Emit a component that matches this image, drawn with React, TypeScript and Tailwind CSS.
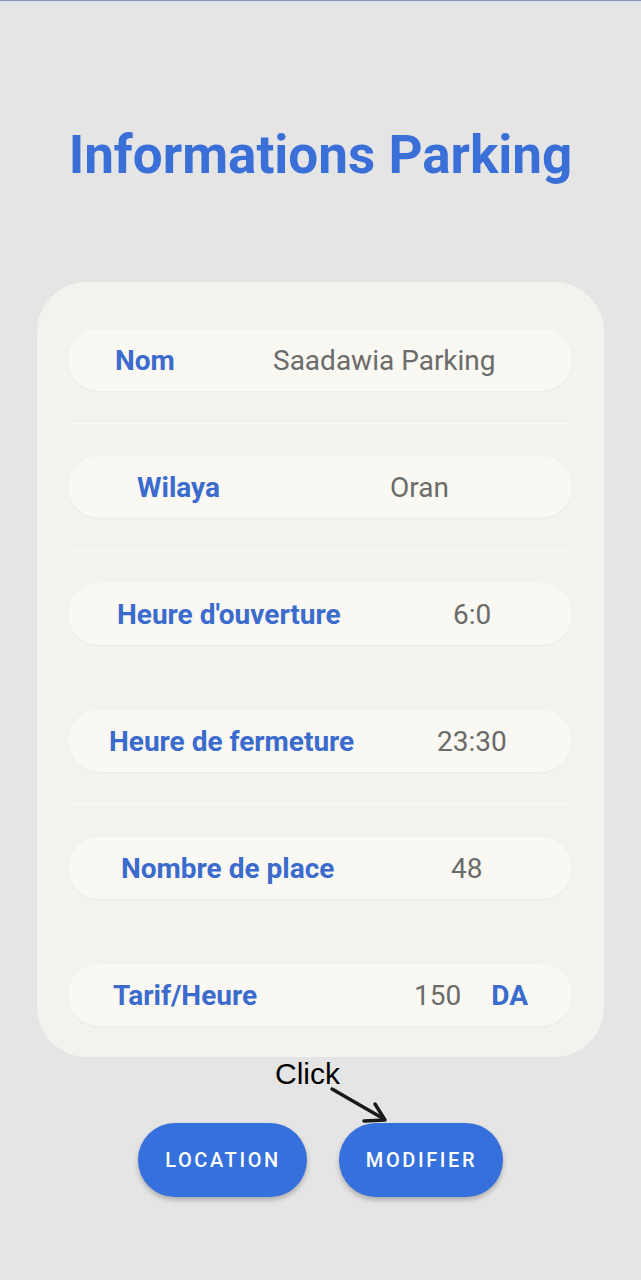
import React from "react";

const rows = [
  { label: "Nom", value: "Saadawia Parking", grid: "grid-cols-[205px_1fr]", lpad: "pl-[47px]", divider: true },
  { label: "Wilaya", value: "Oran", grid: "grid-cols-[322px_1fr]", lpad: "pl-[69px]", divider: true },
  { label: "Heure d'ouverture", value: "6:0", grid: "grid-cols-[385px_1fr]", lpad: "pl-[49px]", divider: false },
  { label: "Heure de fermeture", value: "23:30", grid: "grid-cols-[369px_1fr]", lpad: "pl-[41px]", divider: true },
  { label: "Nombre de place", value: "48", grid: "grid-cols-[383px_1fr]", lpad: "pl-[53px]", divider: false },
];

function Row({ label, value, grid, lpad }: { label: string; value: string; grid: string; lpad: string }) {
  return (
    <div className={`grid ${grid} items-center h-[62px] pt-[2px] rounded-full bg-[#f9f8f3] shadow-[0_1px_2px_rgba(0,0,0,0.04)]`}>
      <span className={`${lpad} text-[28px] leading-[34px] font-bold text-[#3a6bcd] whitespace-nowrap`}>{label}</span>
      <span className="text-[28px] leading-[34px] text-[#6b6b69] whitespace-nowrap">{value}</span>
    </div>
  );
}

export default function App() {
  return (
    <div className="relative w-[641px] h-[1280px] bg-[#e5e5e5] overflow-hidden" style={{ fontFamily: "Roboto, 'Noto Sans', sans-serif" }}>
      <div className="h-[1px] bg-[#8a95b8]" />
      <div className="h-[3px] bg-[#dde3ea]" />
      <h1 className="mt-[122px] text-center text-[53px] leading-[58px] font-bold text-[#3b6fd8]">Informations Parking</h1>
      <div className="mx-auto mt-[98px] w-[567px] h-[775px] rounded-[50px] bg-[#f2f2ee] pt-[47px] pl-[31px] pr-[32px]">
        {rows.map((r) => (
          <div key={r.label}>
            <Row label={r.label} value={r.value} grid={r.grid} lpad={r.lpad} />
            <div className="h-[65px] flex items-center">
              {r.divider ? <div className="w-full h-[1px] bg-[#fbfbf8]" /> : null}
            </div>
          </div>
        ))}
        <div className="flex items-center h-[62px] pt-[2px] rounded-full bg-[#f9f8f3] shadow-[0_1px_2px_rgba(0,0,0,0.04)]">
          <span className="pl-[45px] w-[346px] text-[28px] leading-[34px] font-bold text-[#3a6bcd] whitespace-nowrap">Tarif/Heure</span>
          <span className="text-[28px] leading-[34px] text-[#6b6b69]">150</span>
          <span className="ml-[30px] text-[28px] leading-[34px] font-bold text-[#3a6bcd]">DA</span>
        </div>
      </div>
      <div className="mt-[66px] flex justify-center gap-[32px]">
        <button className="w-[169px] h-[74px] pl-[1px] rounded-full bg-[#3570dc] text-white text-[20px] font-medium tracking-[0.13em] shadow-[0_3px_5px_rgba(0,0,0,0.25)]">LOCATION</button>
        <button className="w-[164px] h-[74px] pl-[1px] rounded-full bg-[#3570dc] text-white text-[20px] font-medium tracking-[0.13em] shadow-[0_3px_5px_rgba(0,0,0,0.25)]">MODIFIER</button>
      </div>
      <span className="absolute left-[275px] top-[1054px] text-[30px] leading-[40px] text-black" style={{ fontFamily: "'Liberation Sans', Arial, sans-serif" }}>Click</span>
      <svg className="absolute left-0 top-0" width="641" height="1280" viewBox="0 0 641 1280" fill="none">
        <path d="M336 1091 L332 1089 L384 1119" stroke="#1a1a1a" strokeWidth="3.5" strokeLinecap="round" strokeLinejoin="round" />
        <path d="M375 1104 L385 1120 L364 1121" stroke="#1a1a1a" strokeWidth="3.5" strokeLinecap="round" strokeLinejoin="round" />
      </svg>
    </div>
  );
}
